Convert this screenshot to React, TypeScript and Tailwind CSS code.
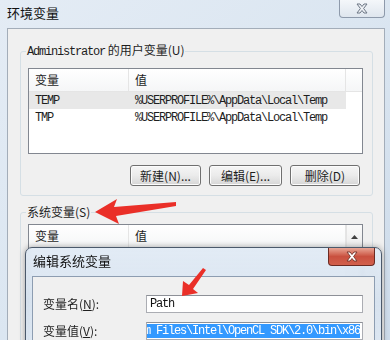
import React from 'react';

const cjk = "font-['Noto_Sans_CJK_SC',sans-serif]";
const mono = "font-['Liberation_Mono','Noto_Sans_CJK_SC',monospace] text-[12px] tracking-[-1.2px]";

const userVars = [
  { name: 'TEMP', value: '%USERPROFILE%\\AppData\\Local\\Temp', selected: true },
  { name: 'TMP', value: '%USERPROFILE%\\AppData\\Local\\Temp', selected: false },
];

function ListHeader() {
  return (
    <div className="flex h-[23px] bg-gradient-to-b from-white to-[#f5f6f7] border-b border-[#e5e5e5]">
      <div className={`w-[100px] pl-[6px] flex items-center border-r border-[#e5e5e5] text-[12px] text-[#1e1e1e] ${cjk}`}>变量</div>
      <div className={`w-[217px] pl-[6px] flex items-center border-r border-[#e5e5e5] text-[12px] text-[#1e1e1e] ${cjk}`}>值</div>
    </div>
  );
}

function WinButton({ label, width }: { label: string; width: string }) {
  return (
    <button
      className={`${width} h-[21px] rounded-[3px] border border-[#707070] bg-gradient-to-b from-[#f6f6f6] via-[#ebebeb] to-[#d6d6d6] text-[12px] leading-[19px] text-[#1e1e1e] shadow-[inset_0_0_0_1px_#fcfcfc] ${cjk}`}
    >
      {label}
    </button>
  );
}

function XGlyph({ color, stroke }: { color: string; stroke: string }) {
  return (
    <svg width="14" height="11" viewBox="0 0 14 11">
      <path d="M2 1 L5 1 L7 3.5 L9 1 L12 1 L8.6 5.5 L12 10 L9 10 L7 7.5 L5 10 L2 10 L5.4 5.5 Z" fill={color} stroke={stroke} strokeWidth="1" strokeLinejoin="round" />
    </svg>
  );
}

export default function App() {
  return (
    <div className="relative w-[390px] h-[340px] overflow-hidden bg-gradient-to-br from-[#e4ecf5] via-[#dbe6f1] to-[#cddbea]">
      {/* outer title bar */}
      <div className="flex h-[28px] items-start justify-between">
        <span className={`pl-[7px] pt-[5px] text-[13px] leading-[16px] text-[#111] ${cjk}`}>环境变量</span>
        <div className="mr-[5px] flex h-[18px] w-[46px] items-center justify-center rounded-b-[4px] border border-t-0 border-[#8e9aab] bg-gradient-to-b from-[#f4f7fa] to-[#dfe6ee]">
          <XGlyph color="#eef1f5" stroke="#6d7785" />
        </div>
      </div>

      {/* outer client */}
      <div className="ml-[7px] h-[320px] w-[378px] border border-[#a3adb9] bg-[#f0f0f0] pl-[12px]">
        <fieldset className="mt-[14px] w-[353px] rounded-[3px] border border-[#d5dfe5]">
          <legend className={`ml-[5px] px-[1px] text-[12px] leading-[14px] text-[#1e1e1e] ${cjk}`}>
            <span className={mono}>Administrator</span> 的用户变量(U)
          </legend>
          <div className="ml-[7px] mt-[9px] h-[86px] w-[335px] border border-[#828790] bg-white">
            <ListHeader />
            {userVars.map((v) => (
              <div key={v.name} className={`flex h-[17px] w-[317px] items-center text-[#1e1e1e] ${v.selected ? 'bg-[#e8e8e8]' : ''}`}>
                <span className={`w-[100px] pl-[6px] ${mono}`}>{v.name}</span>
                <span className={`pl-[6px] ${mono}`}>{v.value}</span>
              </div>
            ))}
          </div>
          <div className="mt-[11px] mb-[9px] flex justify-end gap-[8px] pr-[12px]">
            <WinButton label="新建(N)..." width="w-[71px]" />
            <WinButton label="编辑(E)..." width="w-[73px]" />
            <WinButton label="删除(D)" width="w-[70px]" />
          </div>
        </fieldset>

        <fieldset className="mt-[9px] w-[353px] rounded-[3px] border border-[#d5dfe5]">
          <legend className={`ml-[5px] px-[1px] text-[12px] leading-[14px] text-[#1e1e1e] ${cjk}`}>系统变量(S)</legend>
          <div className="ml-[7px] mt-[5px] flex h-[120px] w-[335px] border border-[#828790] bg-white">
            <div className="flex-1">
              <ListHeader />
            </div>
            <div className="w-[18px] border-l border-[#e3e3e3] bg-[#f2f2f2]">
              <div className="flex h-[23px] items-center justify-center bg-gradient-to-b from-[#fafafa] to-[#ececec]">
                <svg width="7" height="4" viewBox="0 0 7 4">
                  <path d="M0 4 L3.5 0 L7 4 Z" fill="#404040" />
                </svg>
              </div>
            </div>
          </div>
        </fieldset>
      </div>

      {/* edit dialog window lying over the list */}
      <div className="absolute left-[25px] top-[247px] h-[110px] w-[357px] rounded-t-[7px] border border-[#4b596b] bg-gradient-to-b from-[#dfe9f4]/90 via-[#d3e0ee]/85 to-[#dbe6f2]/90 backdrop-blur-[2px] shadow-[0_0_6px_rgba(0,0,0,0.35)]">
        <div className="flex h-[28px] items-start">
          <span className={`pl-[7px] pt-[5px] text-[13px] leading-[16px] text-[#111] ${cjk}`}>编辑系统变量</span>
        </div>
        <div className="absolute right-[6px] top-0 flex h-[18px] w-[47px] items-center justify-center rounded-b-[4px] border border-t-0 border-[#6b2a22] bg-gradient-to-b from-[#e8a595] via-[#c9503f] to-[#d2604c]">
          <XGlyph color="#ffffff" stroke="#7a3a30" />
        </div>
        <div className="ml-[6px] h-[80px] w-[343px] border border-[#8d9db1] bg-[#f0f0f0] pl-[10px] pt-[18px]">
          <div className="grid grid-cols-[103px_217px] items-center gap-y-[9px]">
            <span className={`text-[12px] text-[#1e1e1e] ${cjk}`}>
              变量名(<span className="underline">N</span>):
            </span>
            <div className="flex h-[18px] items-center border border-[#abadb3] border-t-[#8d9097] bg-white pl-[3px]">
              <span className={`${mono} text-[#111]`}>Path</span>
            </div>
            <span className={`text-[12px] text-[#1e1e1e] ${cjk}`}>
              变量值(<span className="underline">V</span>):
            </span>
            <div className="flex h-[18px] items-center justify-end overflow-hidden border border-[#abadb3] border-t-[#8d9097] bg-white px-[2px]">
              <span className={`whitespace-nowrap bg-[#3399ff] leading-[14px] text-white ${mono}`}>Program Files\Intel\OpenCL SDK\2.0\bin\x86</span>
            </div>
          </div>
        </div>
      </div>

      {/* red annotation arrows */}
      <svg className="pointer-events-none absolute left-0 top-0" width="390" height="340" viewBox="0 0 390 340">
        <path d="M95 212 L117 199 L114 207 L176 202 L176 206 L116 216 L119 224 Z" fill="#ea2f28" />
        <path d="M182 296 L183 281 L189 285 L203 268 L206 270 L193 289 L198 293 Z" fill="#ea2f28" />
      </svg>
    </div>
  );
}
